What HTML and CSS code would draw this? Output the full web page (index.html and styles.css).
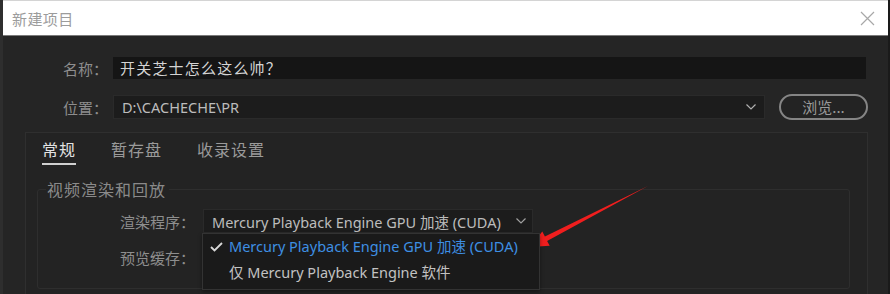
FILE: index.html
```html
<!DOCTYPE html>
<html lang="zh-CN">
<head>
    <meta charset="UTF-8">
    <meta name="viewport" content="width=device-width, initial-scale=1.0">
    <title>新建项目</title>
    <link rel="stylesheet" href="styles.css">
</head>
<body>
<div class="window">
    <div class="titlebar">
        <span class="title">新建项目</span>
        <svg class="close" width="15" height="15" viewBox="0 0 15 15">
            <path d="M1 1 L14 14 M14 1 L1 14" stroke="#a8a8a8" stroke-width="1.2" fill="none"/>
        </svg>
    </div>

    <div class="form">
        <label class="label">名称：</label>
        <div class="input name-input">开关芝士怎么这么帅？</div>

        <label class="label">位置：</label>
        <div class="select path-select">
            <span>D:\CACHECHE\PR</span>
            <svg class="chevron" width="10" height="6" viewBox="0 0 10 6"><path d="M0.5 0.5 L5 5 L9.5 0.5" stroke="#b0b0b0" stroke-width="1.2" fill="none"/></svg>
        </div>
        <button class="browse">浏览...</button>
    </div>

    <div class="panel">
        <div class="tabs">
            <span class="tab active">常规</span>
            <span class="tab">暂存盘</span>
            <span class="tab">收录设置</span>
        </div>

        <fieldset class="group">
            <legend>视频渲染和回放</legend>
            <div class="rows">
                <label class="label">渲染程序：</label>
                <div class="dropdown">
                    <div class="select renderer">
                        <span>Mercury Playback Engine GPU 加速 (CUDA)</span>
                        <svg class="chevron" width="10" height="6" viewBox="0 0 10 6"><path d="M0.5 0.5 L5 5 L9.5 0.5" stroke="#a0a0a0" stroke-width="1.2" fill="none"/></svg>
                    </div>
                    <div class="menu">
                        <div class="menu-item checked">
                            <svg class="check" width="13" height="10" viewBox="0 0 13 10"><path d="M1 5 L4.5 8.5 L12 1" stroke="#d8d8d8" stroke-width="1.8" fill="none"/></svg>
                            Mercury Playback Engine GPU 加速 (CUDA)
                        </div>
                        <div class="menu-item">仅 Mercury Playback Engine 软件</div>
                    </div>
                </div>

                <label class="label">预览缓存：</label>
                <div class="select cache"></div>
            </div>
        </fieldset>
    </div>
</div>

<svg class="arrow" width="890" height="294" viewBox="0 0 890 294">
    <polygon points="648,186 547.1,240.9 549.7,245.8 530,247 542.3,231.6 544.9,236.5" fill="#f01e1e"/>
</svg>
</body>
</html>
```

FILE: styles.css
```css
body {
    margin: 0;
    width: 890px;
    height: 294px;
    overflow: hidden;
    background: #232323;
    font-family: "Noto Sans", "Noto Sans CJK SC", sans-serif;
    position: relative;
}

.window {
    height: 294px;
    border-left: 3px solid #2e2e2e;
    border-right: 2px solid #1a1a1a;
    box-sizing: border-box;
    background: #252525;
    overflow: hidden;
}

/* title bar */
.titlebar {
    height: 36px;
    background: #fff;
    border-top: 1px solid #d4d4d4;
    border-bottom: 1px solid #7a7a7a;
    box-sizing: border-box;
    display: flex;
    align-items: center;
    justify-content: space-between;
    padding: 0 13px 0 9px;
}

.title {
    font-family: "Noto Sans CJK SC", sans-serif;
    font-size: 15px;
    color: #9c9c9c;
    letter-spacing: 0.4px;
}

.close {
    margin-top: 1px;
}

/* name + location */
.form {
    display: grid;
    grid-template-columns: 105px 1fr 89px;
    column-gap: 5px;
    row-gap: 15px;
    padding: 21px 20px 0 0;
    align-items: center;
}

.label {
    font-family: "Noto Sans CJK SC", sans-serif;
    font-size: 15px;
    color: #8e8e8e;
    text-align: right;
}

.input {
    height: 22px;
    background: #151515;
    color: #d4d4d4;
    font-family: "Noto Sans CJK SC", sans-serif;
    font-size: 15px;
    letter-spacing: 1.2px;
    line-height: 22px;
    padding-left: 7px;
    margin-right: 2px;
}

.name-input {
    grid-column: 2 / 4;
}

.select {
    height: 24px;
    box-sizing: border-box;
    background: #1c1c1c;
    border: 1px solid #2a2a2a;
    color: #bcbcbc;
    display: flex;
    align-items: center;
    justify-content: space-between;
    padding: 0 8px 0 8px;
    font-size: 14.5px;
}

.path-select {
    margin-right: 9px;
}

.browse {
    height: 26px;
    box-sizing: border-box;
    border: 2px solid #858585;
    border-radius: 13px;
    background: #232323;
    color: #9a9a9a;
    font-family: "Noto Sans CJK SC", sans-serif;
    font-size: 15px;
    padding: 0;
    line-height: 20px;
}

/* tabbed panel */
.panel {
    margin: 12px 20px 0 22px;
    border: 1px solid #2f2f2f;
    border-bottom: none;
    background: #232323;
    height: 162px;
}

.tabs {
    display: flex;
    gap: 35px;
    padding: 4px 0 0 16px;
}

.tab {
    font-family: "Noto Sans CJK SC", sans-serif;
    font-size: 16px;
    letter-spacing: 1px;
    color: #9a9a9a;
    padding-bottom: 2px;
    border-bottom: 2px solid transparent;
}

.tab.active {
    color: #e2e2e2;
    border-bottom-color: #d0d0d0;
}

.group {
    margin: 12px 17px 0 11px;
    padding: 0;
    border: 1px solid #2e2e2e;
    border-radius: 3px;
    height: 112px;
    box-sizing: border-box;
}

.group legend {
    font-family: "Noto Sans CJK SC", sans-serif;
    font-size: 16px;
    letter-spacing: 1px;
    color: #8a8a8a;
    margin-left: 8px;
    padding: 0 3px 0 1px;
}

.rows {
    display: grid;
    grid-template-columns: 157px 330px;
    column-gap: 8px;
    row-gap: 12px;
    align-items: center;
    padding-top: 8px;
}

.dropdown {
    position: relative;
}

.renderer {
    padding-right: 6px;
}

.menu {
    position: absolute;
    top: 24px;
    left: -1px;
    width: 338px;
    height: 57px;
    box-sizing: border-box;
    background: #1a1a1a;
    border: 1px solid #333;
    box-shadow: 0 2px 4px rgba(0, 0, 0, 0.4);
    z-index: 1;
}

.menu-item {
    position: relative;
    height: 26px;
    line-height: 25px;
    padding-left: 26px;
    font-size: 14.5px;
    color: #c2c2c2;
}

.menu-item.checked {
    color: #3e8fe3;
}

.check {
    position: absolute;
    left: 7px;
    top: 8px;
}

.arrow {
    position: absolute;
    left: 0;
    top: 0;
    pointer-events: none;
}
```
